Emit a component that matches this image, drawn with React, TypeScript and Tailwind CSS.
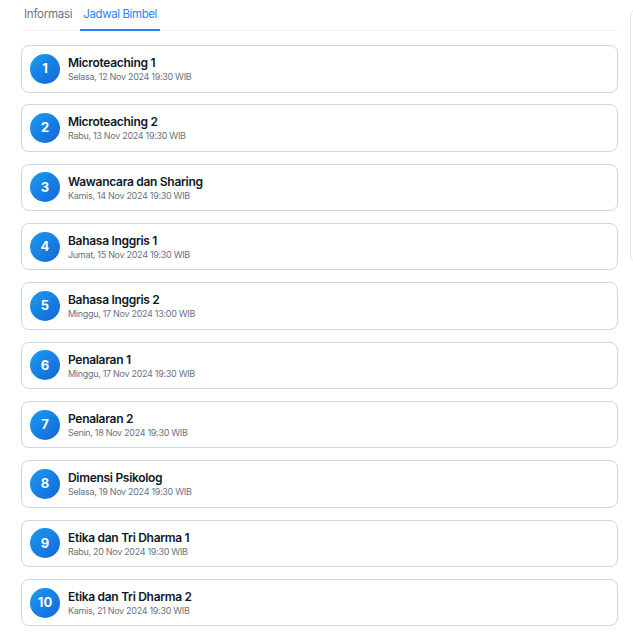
import React from "react";

interface Session {
  title: string;
  date: string;
}

const sessions: Session[] = [
  { title: "Microteaching 1", date: "Selasa, 12 Nov 2024 19:30 WIB" },
  { title: "Microteaching 2", date: "Rabu, 13 Nov 2024 19:30 WIB" },
  { title: "Wawancara dan Sharing", date: "Kamis, 14 Nov 2024 19:30 WIB" },
  { title: "Bahasa Inggris 1", date: "Jumat, 15 Nov 2024 19:30 WIB" },
  { title: "Bahasa Inggris 2", date: "Minggu, 17 Nov 2024 13:00 WIB" },
  { title: "Penalaran 1", date: "Minggu, 17 Nov 2024 19:30 WIB" },
  { title: "Penalaran 2", date: "Senin, 18 Nov 2024 19:30 WIB" },
  { title: "Dimensi Psikolog", date: "Selasa, 19 Nov 2024 19:30 WIB" },
  { title: "Etika dan Tri Dharma 1", date: "Rabu, 20 Nov 2024 19:30 WIB" },
  { title: "Etika dan Tri Dharma 2", date: "Kamis, 21 Nov 2024 19:30 WIB" },
];

const App: React.FC = () => {
  return (
    <div
      className="w-[633px] h-[640px] overflow-hidden bg-white flex"
      style={{ fontFamily: "Inter, 'Noto Sans', sans-serif" }}
    >
      <div className="w-[618px] shrink-0 pl-[21px]">
        {/* tabs */}
        <div className="flex gap-[5px] border-b border-gray-100 h-[31px]">
          <div className="px-[3px] flex items-center text-[11.5px] text-gray-500 tracking-[-0.25px]">
            Informasi
          </div>
          <div className="px-[3px] flex items-center text-[11.5px] text-blue-500 tracking-[-0.4px] border-b-2 border-blue-500 -mb-px">
            Jadwal Bimbel
          </div>
        </div>

        {/* schedule list */}
        <div className="flex flex-col gap-[11.83px] mt-[14px]">
          {sessions.map((s, i) => (
            <div
              key={i}
              className="h-[47.5px] flex items-center gap-[8px] px-[8px] border border-gray-300 rounded-lg"
            >
              <div className="w-[30px] h-[30px] rounded-full bg-gradient-to-br from-[#1e9bf0] to-[#1565d8] text-white flex items-center justify-center text-[13px] font-bold shrink-0">
                {i + 1}
              </div>
              <div className="flex flex-col leading-tight">
                <span className="text-[12px] font-semibold text-gray-900 tracking-[-0.3px]">
                  {s.title}
                </span>
                <span className="text-[9px] text-gray-500 tracking-[-0.3px] mt-[1px]">
                  {s.date}
                </span>
              </div>
            </div>
          ))}
        </div>
      </div>

      {/* side panel, mostly offscreen */}
      <div className="ml-[12px] mt-[5px] w-[300px] h-[261px] shrink-0 border border-gray-200 rounded-xl" />
    </div>
  );
};

export default App;
